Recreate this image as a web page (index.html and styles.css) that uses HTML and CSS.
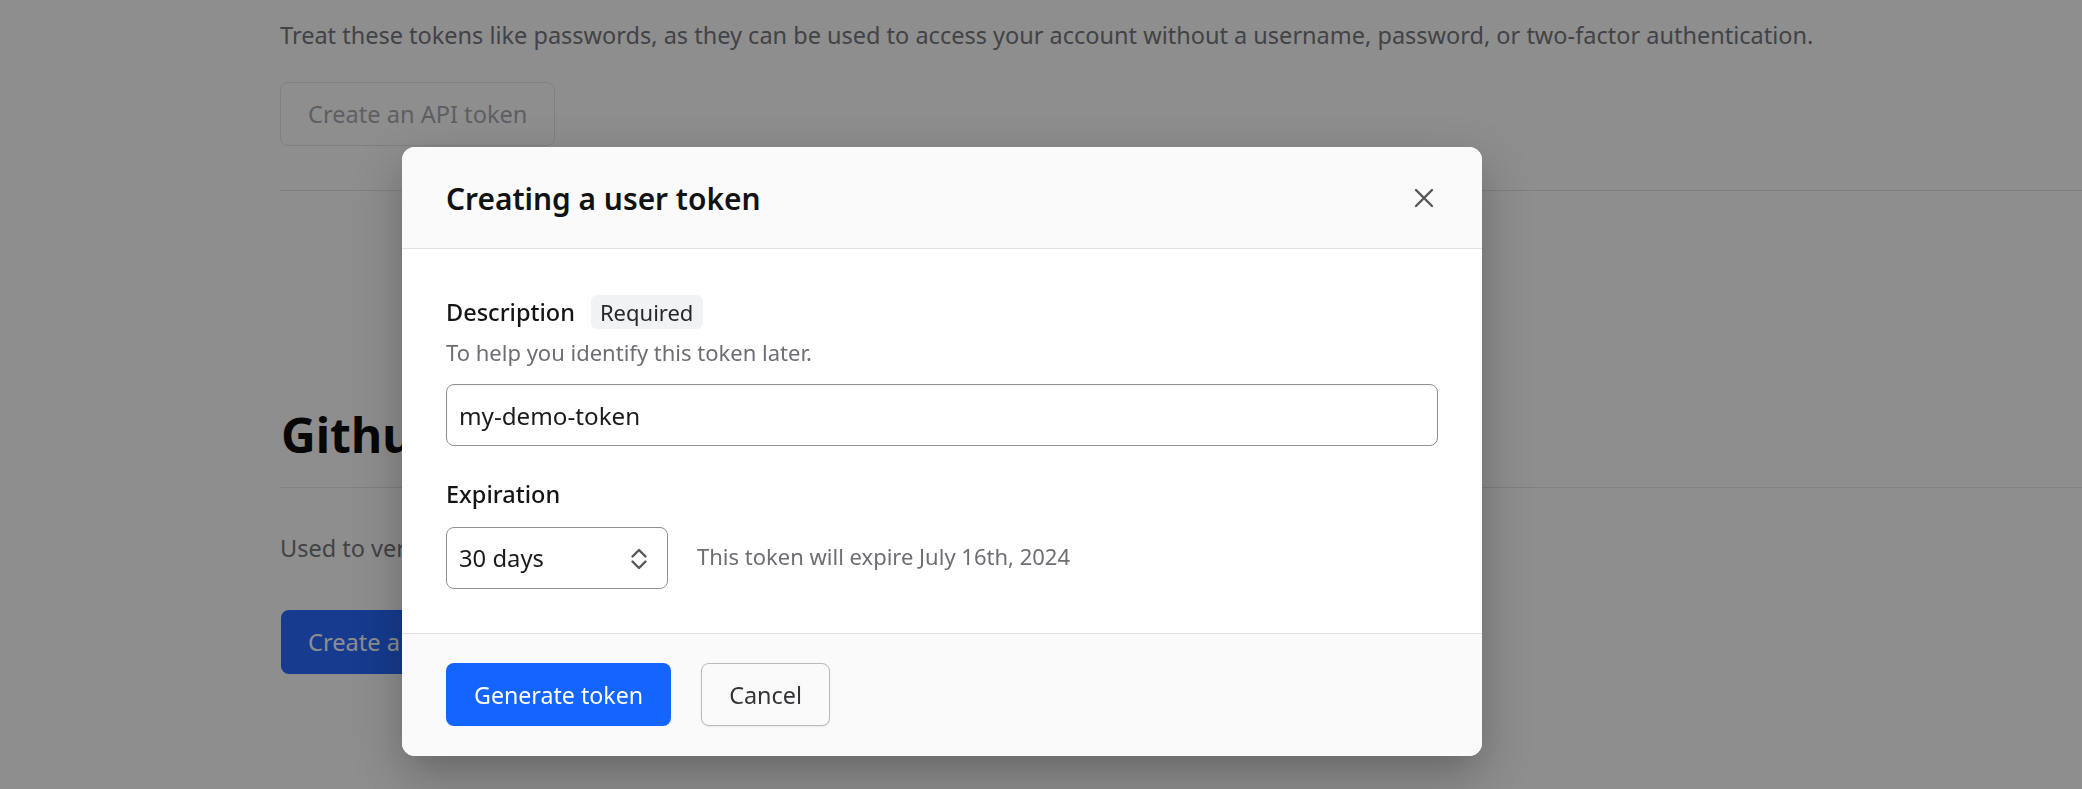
FILE: index.html
```html
<!DOCTYPE html>
<html lang="en">
<head>
<meta charset="utf-8">
<title>Creating a user token</title>
<link rel="stylesheet" href="styles.css">
</head>
<body>
<main class="page">
  <p class="page-text">Treat these tokens like passwords, as they can be used to access your account without a username, password, or two-factor authentication.</p>
  <button class="btn-outline" type="button">Create an API token</button>
  <hr class="rule rule-top">
  <h2 class="page-heading">Github</h2>
  <hr class="rule rule-mid">
  <p class="page-text page-text-2">Used to verify</p>
  <button class="btn-page-primary" type="button">Create a</button>
</main>

<div class="overlay">
  <div class="modal" role="dialog" aria-labelledby="modal-title">
    <header class="modal-header">
      <h1 id="modal-title" class="modal-title">Creating a user token</h1>
      <button class="close" type="button" aria-label="Close">
        <svg width="20" height="20" viewBox="0 0 20 20" fill="none" stroke="#55575c" stroke-width="2.4" stroke-linecap="round"><path d="M2 2 L18 18 M18 2 L2 18"/></svg>
      </button>
    </header>
    <section class="modal-body">
      <div class="field-head">
        <span class="label">Description</span>
        <span class="badge">Required</span>
      </div>
      <p class="help">To help you identify this token later.</p>
      <input class="input" type="text" value="my-demo-token">
      <div class="label label-exp">Expiration</div>
      <div class="exp-row">
        <div class="select">
          <span>30 days</span>
          <svg width="18" height="24" viewBox="0 0 18 24" fill="none" stroke="#55575c" stroke-width="2.4" stroke-linecap="round" stroke-linejoin="round"><path d="M2.5 9.5 L9 3 L15.5 9.5 M2.5 14.5 L9 21 L15.5 14.5"/></svg>
        </div>
        <span class="exp-note">This token will expire July 16th, 2024</span>
      </div>
    </section>
    <footer class="modal-footer">
      <button class="btn-primary" type="button">Generate token</button>
      <button class="btn-cancel" type="button">Cancel</button>
    </footer>
  </div>
</div>
</body>
</html>
```
FILE: styles.css
```css
* { box-sizing: border-box; }
html, body { margin: 0; padding: 0; }
body {
  width: 2082px;
  height: 789px;
  overflow: hidden;
  background: #ffffff;
  font-family: "Noto Sans", "Open Sans", sans-serif;
  color: #1b1b1b;
}

/* background page */
.page {
  padding: 18px 0 0 280px;
  display: flex;
  flex-direction: column;
  align-items: flex-start;
}
.page-text {
  margin: 0;
  font-size: 23.5px;
  line-height: 35px;
  color: #707176;
  white-space: nowrap;
}
.btn-outline {
  margin-top: 29px;
  height: 64px;
  padding: 0 27px;
  border: 1px solid #e4e4e6;
  border-radius: 8px;
  background: transparent;
  font-family: inherit;
  font-size: 23.6px;
  color: #a6a7ab;
}
.rule {
  align-self: stretch;
  border: 0;
  height: 1px;
  background: #e3e3e5;
  margin: 0;
}
.rule-top { margin-top: 44px; }
.page-heading {
  margin: 215px 0 0 1px;
  font-size: 48px;
  line-height: 57px;
  font-weight: 700;
  color: #000;
}
.rule-mid { margin-top: 24px; }
.page-text-2 { margin-top: 43px; }
.btn-page-primary {
  margin-top: 44px;
  margin-left: 1px;
  width: 200px;
  height: 64px;
  padding: 0 27px;
  text-align: left;
  border: 0;
  border-radius: 8px;
  background: #1d63ff;
  color: #fff;
  font-family: inherit;
  font-size: 23.6px;
}

/* overlay + modal */
.overlay {
  position: fixed;
  inset: 0;
  background: rgba(14, 14, 18, 0.47);
  padding: 147px 0 0 402px;
}
.modal {
  width: 1080px;
  height: 609px;
  border-radius: 13px;
  overflow: hidden;
  background: #ffffff;
  box-shadow: 0 18px 48px rgba(0, 0, 0, 0.28);
  display: flex;
  flex-direction: column;
}
.modal-header {
  height: 102px;
  flex: none;
  background: #fafafa;
  border-bottom: 1px solid #e2e2e4;
  padding: 0 44px;
  display: flex;
  align-items: center;
  justify-content: space-between;
}
.modal-title {
  margin: 0;
  font-size: 29.9px;
  font-weight: 580;
  line-height: 40px;
  color: #121212;
  padding-top: 3px;
}
.close {
  width: 20px;
  height: 20px;
  padding: 0;
  border: 0;
  background: none;
  margin-right: 4px;
  display: flex;
}

.modal-body {
  flex: none;
  padding: 46px 44px 44px;
  display: flex;
  flex-direction: column;
  align-items: stretch;
}
.field-head {
  height: 34px;
  display: flex;
  align-items: center;
  gap: 16px;
}
.label {
  font-size: 23.5px;
  font-weight: 500;
  line-height: 32px;
  color: #141414;
}
.badge {
  height: 34px;
  padding: 0 10px 0 9px;
  border-radius: 6px;
  background: #f1f2f4;
  font-size: 22px;
  line-height: 34px;
  color: #26272b;
}
.help {
  margin: 8px 0 0;
  font-size: 22px;
  line-height: 30px;
  color: #6c6e73;
}
.input {
  margin-top: 17px;
  height: 62px;
  width: 100%;
  border: 1px solid #8f9096;
  border-radius: 8px;
  padding: 0 12px;
  font-family: inherit;
  font-size: 24.2px;
  color: #1b1b1b;
  background: #fff;
  box-shadow: inset 0 1px 2px rgba(0, 0, 0, 0.04);
  outline: none;
}
.label-exp { margin-top: 32px; }
.exp-row {
  margin-top: 17px;
  display: flex;
  align-items: center;
  gap: 29px;
}
.select {
  width: 222px;
  height: 62px;
  border: 1px solid #8f9096;
  border-radius: 8px;
  padding: 0 19px 0 12px;
  display: flex;
  align-items: center;
  justify-content: space-between;
  font-size: 23.8px;
  color: #1b1b1b;
  background: #fff;
}
.select svg { margin-top: 1px; }
.exp-note {
  font-size: 22px;
  color: #6c6e73;
  padding-bottom: 4px;
}

.modal-footer {
  flex: 1;
  background: #fafafa;
  border-top: 1px solid #e2e2e4;
  padding: 29px 44px 30px;
  display: flex;
  align-items: flex-start;
  gap: 30px;
}
.btn-primary {
  height: 63px;
  padding: 0 28px;
  border: 0;
  border-radius: 8px;
  background: #1464ff;
  color: #ffffff;
  font-family: inherit;
  font-size: 23.2px;
}
.btn-cancel {
  height: 63px;
  padding: 0 27px;
  border: 1px solid #b9babd;
  border-radius: 8px;
  background: #fafafa;
  color: #333438;
  font-family: inherit;
  font-size: 23.4px;
  box-shadow: 0 1px 2px rgba(0, 0, 0, 0.08);
}
```
